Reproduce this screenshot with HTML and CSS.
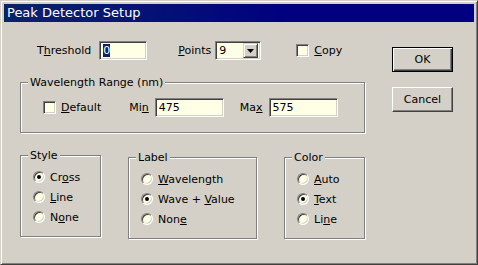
FILE: index.html
```html
<!DOCTYPE html>
<html lang="en">
<head>
  <meta charset="UTF-8">
  <title>Peak Detector Setup</title>
  <link rel="stylesheet" href="styles.css">
</head>
<body>
  <div class="window">
    <div class="titlebar">Peak Detector Setup</div>
    <div class="client">
      <div class="main">
        <div class="top-row">
          <span class="lbl lbl-threshold">T<u>h</u>reshold</span>
          <span class="field field-threshold"><span class="selected">0</span></span>
          <span class="lbl lbl-points"><u>P</u>oints</span>
          <span class="field combo">
            <span class="combo-value">9</span>
            <span class="combo-btn">
              <svg width="7" height="4" viewBox="0 0 7 4"><path d="M0 0h7L3.5 4z" fill="#000"/></svg>
            </span>
          </span>
          <span class="check-item copy"><span class="check"></span><span><u>C</u>opy</span></span>
        </div>

        <fieldset class="group range">
          <legend>Wavelength Range (nm)</legend>
          <div class="range-row">
            <span class="check-item"><span class="check"></span><span><u>D</u>efault</span></span>
            <span class="lbl lbl-min">Mi<u>n</u></span>
            <span class="field field-range">475</span>
            <span class="lbl lbl-max">Ma<u>x</u></span>
            <span class="field field-range">575</span>
          </div>
        </fieldset>

        <div class="groups">
          <fieldset class="group small style">
            <legend>Style</legend>
            <div class="radio-item"><span class="radio on"></span><span>Cr<u>o</u>ss</span></div>
            <div class="radio-item"><span class="radio"></span><span><u>L</u>ine</span></div>
            <div class="radio-item"><span class="radio"></span><span>N<u>o</u>ne</span></div>
          </fieldset>
          <fieldset class="group wide">
            <legend>Label</legend>
            <div class="radio-item"><span class="radio"></span><span><u>W</u>avelength</span></div>
            <div class="radio-item"><span class="radio on"></span><span>Wave + <u>V</u>alue</span></div>
            <div class="radio-item"><span class="radio"></span><span>Non<u>e</u></span></div>
          </fieldset>
          <fieldset class="group small shifted">
            <legend>Color</legend>
            <div class="radio-item"><span class="radio"></span><span><u>A</u>uto</span></div>
            <div class="radio-item"><span class="radio on"></span><span><u>T</u>ext</span></div>
            <div class="radio-item"><span class="radio"></span><span>Li<u>n</u>e</span></div>
          </fieldset>
        </div>
      </div>

      <div class="buttons">
        <button class="btn btn-default">OK</button>
        <button class="btn">Cancel</button>
      </div>
    </div>
  </div>
</body>
</html>
```

FILE: styles.css
```css
body {
  margin: 0;
  background: #d4d0c8;
  font-family: "DejaVu Sans", Verdana, sans-serif;
  font-size: 11px;
  color: #000;
}
.window {
  width: 478px;
  height: 265px;
  box-sizing: border-box;
  border: 1px solid;
  border-color: #d4d0c8 #404040 #404040 #d4d0c8;
  box-shadow: inset 1px 1px #fff, inset -1px -1px #808080;
  padding: 3px;
  background: #d4d0c8;
}
.titlebar {
  height: 18px;
  line-height: 18px;
  padding-left: 3px;
  background: linear-gradient(to right, #0a246a, #000080 60%);
  color: #fff;
  font-size: 13px;
}
.client {
  display: flex;
}
.main {
  display: flex;
  flex-direction: column;
  padding: 19px 0 0 16px;
  width: 345px;
}

/* first row */
.top-row {
  display: flex;
  align-items: center;
  height: 19px;
  padding-left: 17px;
}
.lbl {
  line-height: 13px;
}
.lbl-threshold { margin-right: 8px; }
.lbl-points { margin: 0 4px 0 31px; }
.field {
  display: inline-flex;
  align-items: center;
  box-sizing: border-box;
  height: 19px;
  background: #ffffe6;
  border: 1px solid;
  border-color: #808080 #fff #fff #808080;
  box-shadow: inset 1px 1px #404040, inset -1px -1px #d4d0c8;
  padding: 0 3px;
  line-height: 13px;
}
.field-threshold { width: 48px; }
.selected {
  background: #0a246a;
  color: #fff;
}
.combo {
  width: 46px;
  padding-right: 2px;
  justify-content: space-between;
}
.combo-btn {
  display: flex;
  align-items: center;
  justify-content: center;
  box-sizing: border-box;
  width: 15px;
  height: 15px;
  background: #d4d0c8;
  border: 1px solid;
  border-color: #d4d0c8 #404040 #404040 #d4d0c8;
  box-shadow: inset 1px 1px #fff, inset -1px -1px #808080;
}
.check-item {
  display: flex;
  align-items: center;
}
.check {
  box-sizing: border-box;
  width: 13px;
  height: 13px;
  margin-right: 5px;
  background: #ffffe6;
  border: 1px solid;
  border-color: #808080 #fff #fff #808080;
  box-shadow: inset 1px 1px #404040, inset -1px -1px #d4d0c8;
}
.copy { margin-left: 35px; }

/* group boxes */
.group {
  margin: 0;
  border: 1px solid #808080;
  box-shadow: 1px 1px 0 #fff, inset 1px 1px 0 #fff;
  padding: 0 7px;
}
.group legend {
  padding: 0 2px;
  line-height: 13px;
  background: #d4d0c8;
}
.range {
  margin-top: 16px;
  height: 57px;
  box-sizing: border-box;
}
.range-row {
  display: flex;
  align-items: center;
  height: 19px;
  margin-top: 9px;
  padding-left: 15px;
}
.lbl-min { margin: 0 6px 0 28px; }
.lbl-max { margin: 0 6px 0 16px; }
.field-range { width: 69px; }

.groups {
  display: flex;
  gap: 27px;
  margin-top: 16px;
  align-items: flex-start;
}
.small { width: 81px; box-sizing: border-box; }
.wide { width: 129px; box-sizing: border-box; margin-top: 2px; }
.shifted { margin-top: 2px; }
.groups .group { padding-top: 5px; padding-bottom: 9px; }
.radio-item {
  display: flex;
  align-items: center;
  height: 20px;
  padding-left: 5px;
}
.radio {
  position: relative;
  box-sizing: border-box;
  width: 12px;
  height: 12px;
  margin-right: 5px;
  border-radius: 50%;
  background: #ffffe6;
  border: 1px solid;
  border-color: #808080 #fff #fff #808080;
  box-shadow: inset 1px 1px #404040, inset -1px -1px #d4d0c8;
}
.radio.on::after {
  content: "";
  position: absolute;
  left: 3px;
  top: 3px;
  width: 4px;
  height: 4px;
  border-radius: 50%;
  background: #000;
}

/* buttons */
.buttons {
  display: flex;
  flex-direction: column;
  gap: 15px;
  padding-top: 25px;
  margin-left: 27px;
}
.btn {
  box-sizing: border-box;
  width: 61px;
  height: 25px;
  font: inherit;
  color: #000;
  background: #d4d0c8;
  border: 1px solid;
  border-color: #fff #404040 #404040 #fff;
  box-shadow: inset -1px -1px #808080;
  padding: 0;
}
.btn-default {
  border-color: #000;
  box-shadow: inset 1px 1px #fff, inset -1px -1px #404040, inset -2px -2px #808080;
}
```
